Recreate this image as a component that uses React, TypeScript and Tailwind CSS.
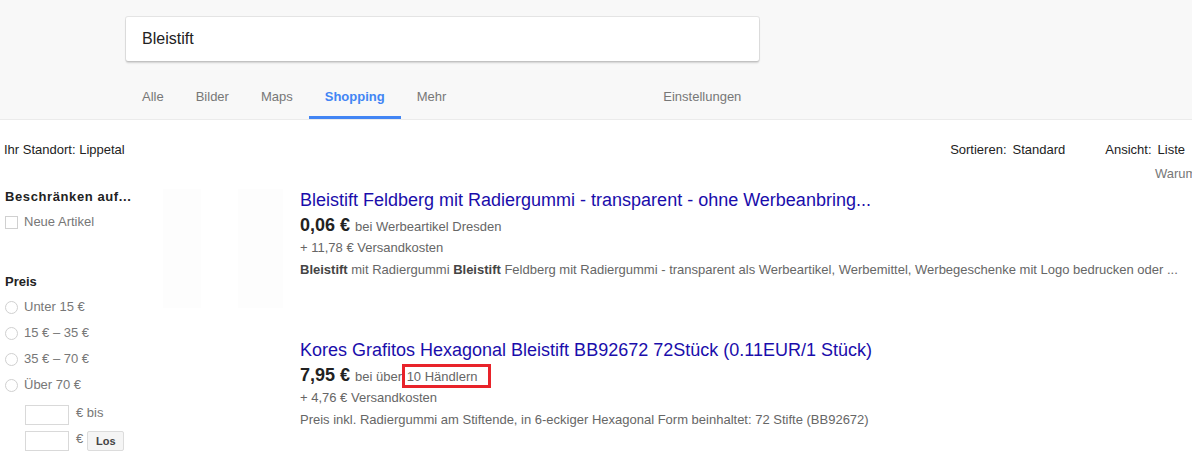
import React from 'react'

const tabs = ['Alle', 'Bilder', 'Maps', 'Shopping', 'Mehr']
const prices = ['Unter 15 €', '15 € – 35 €', '35 € – 70 €', 'Über 70 €']

function Header() {
  return (
    <div className="h-[120px] bg-[#f8f8f8] border-b border-[#ebebeb] pt-[17px]">
      {/* Search box */}
      <div className="ml-[126px] w-[633px] h-[44px] bg-white flex items-center pl-[16px] text-[16px] text-[#222] shadow-[0_2px_2px_0_rgba(0,0,0,0.16),0_0_0_1px_rgba(0,0,0,0.08)] rounded-[2px]">
        Bleistift
      </div>
      {/* Tabs */}
      <div className="flex mt-[19px] pl-[126px] text-[13px]">
        {tabs.map(t => (
          <div
            key={t}
            className={`h-[39px] px-[16px] pt-[9px] leading-[16px] border-b-[3px] ${
              t === 'Shopping' ? 'border-[#4285f4] text-[#4285f4] font-bold' : 'border-transparent text-[#777]'
            }`}
          >
            {t}
          </div>
        ))}
        <div className="ml-[185px] h-[39px] px-[16px] pt-[9px] leading-[16px] text-[#777]">Einstellungen</div>
      </div>
    </div>
  )
}

function Sidebar() {
  return (
    <div className="w-[163px] shrink-0 text-[13px] leading-[16px]">
      <div className="pl-[5px] font-bold text-[#222] tracking-[0.6px]">Beschränken auf...</div>
      <div className="mt-[9px] flex items-center pl-[5px] text-[#777]">
        <span className="w-[13px] h-[13px] border border-[#d0d0d0] bg-white" />
        <span className="ml-[6px]">Neue Artikel</span>
      </div>
      <div className="mt-[44px] pl-[5px] font-bold text-[#222]">Preis</div>
      <div className="mt-[9px] flex flex-col gap-[10px]">
        {prices.map(p => (
          <div key={p} className="flex items-center pl-[5px] text-[#777]">
            <span className="w-[13px] h-[13px] rounded-full border border-[#d0d0d0] bg-white" />
            <span className="ml-[6px]">{p}</span>
          </div>
        ))}
      </div>
      <div className="mt-[12px] pl-[25px] flex items-center text-[#777]">
        <span className="w-[44px] h-[20px] border border-[#d9d9d9] bg-white" />
        <span className="ml-[7px] -mt-[4px]">€ bis</span>
      </div>
      <div className="mt-[6px] pl-[25px] flex items-center text-[#777]">
        <span className="w-[44px] h-[20px] border border-[#d9d9d9] bg-white" />
        <span className="ml-[7px] -mt-[4px]">€</span>
        <button className="ml-[4px] h-[20px] w-[37px] border border-[#dcdcdc] bg-[#f5f5f5] rounded-[2px] text-[11px] font-bold text-[#444] leading-[18px]">
          Los
        </button>
      </div>
    </div>
  )
}

function Results() {
  return (
    <div className="flex-1 min-w-0">
      {/* Result 1 */}
      <div className="flex">
        <div className="w-[137px] shrink-0 flex h-[119px]">
          <div className="w-[38px] h-full bg-[#fdfdfd]" />
          <div className="ml-[37px] w-[45px] h-full bg-[#fdfdfd]" />
        </div>
        <div className="min-w-0 whitespace-nowrap">
          <div className="text-[18px] leading-[22px] text-[#1a0dab]">
            Bleistift Feldberg mit Radiergummi - transparent - ohne Werbeanbring...
          </div>
          <div className="mt-[3px] leading-[22px]">
            <span className="text-[18px] font-bold text-[#222]">0,06 €</span>
            <span className="ml-[5px] text-[13px] text-[#666]">bei Werbeartikel Dresden</span>
          </div>
          <div className="mt-[2px] text-[13px] leading-[16px] text-[#666]">+ 11,78 € Versandkosten</div>
          <div className="mt-[6px] text-[13px] leading-[16px] text-[#666]">
            <b className="text-[#444]">Bleistift</b> mit Radiergummi <b className="text-[#444]">Bleistift</b> Feldberg mit
            Radiergummi - transparent als Werbeartikel, Werbemittel, Werbegeschenke mit Logo bedrucken oder ...
          </div>
        </div>
      </div>
      {/* Result 2 */}
      <div className="flex mt-[31px]">
        <div className="w-[137px] shrink-0" />
        <div className="min-w-0 whitespace-nowrap">
          <div className="text-[18px] leading-[22px] text-[#1a0dab]">
            Kores Grafitos Hexagonal Bleistift BB92672 72Stück (0.11EUR/1 Stück)
          </div>
          <div className="mt-[3px] leading-[22px]">
            <span className="text-[18px] font-bold text-[#222]">7,95 €</span>
            <span className="ml-[5px] text-[13px] text-[#666]">bei über </span>
            <span className="relative ml-[1px] text-[13px] text-[#666]">
              10 Händlern
              <span className="absolute -left-[5px] -right-[14px] -top-[5px] -bottom-[4px] border-[3px] border-[#e8232a]" />
            </span>
          </div>
          <div className="mt-[2px] text-[13px] leading-[16px] text-[#666]">+ 4,76 € Versandkosten</div>
          <div className="mt-[6px] text-[13px] leading-[16px] text-[#666]">
            Preis inkl. Radiergummi am Stiftende, in 6-eckiger Hexagonal Form beinhaltet: 72 Stifte (BB92672)
          </div>
        </div>
      </div>
    </div>
  )
}

export default function App() {
  return (
    <div className="w-[1192px] h-[457px] overflow-hidden bg-white font-['Liberation_Sans',Arial,sans-serif]">
      <Header />
      <div className="mt-[22px] flex text-[13px] leading-[16px] text-[#222] whitespace-nowrap">
        <div className="pl-[4px]">Ihr Standort: Lippetal</div>
        <div className="ml-auto flex gap-[40px] pr-[7px]">
          <div>
            Sortieren:<span className="ml-[6px]">Standard</span>
          </div>
          <div>
            Ansicht:<span className="ml-[6px]">Liste</span>
          </div>
        </div>
      </div>
      <div className="mt-[8px] ml-[1155px] text-[13px] leading-[16px] text-[#777] whitespace-nowrap">Warum Sie diese Anzeigen sehen</div>
      <div className="mt-[7px] flex">
        <Sidebar />
        <Results />
      </div>
    </div>
  )
}
